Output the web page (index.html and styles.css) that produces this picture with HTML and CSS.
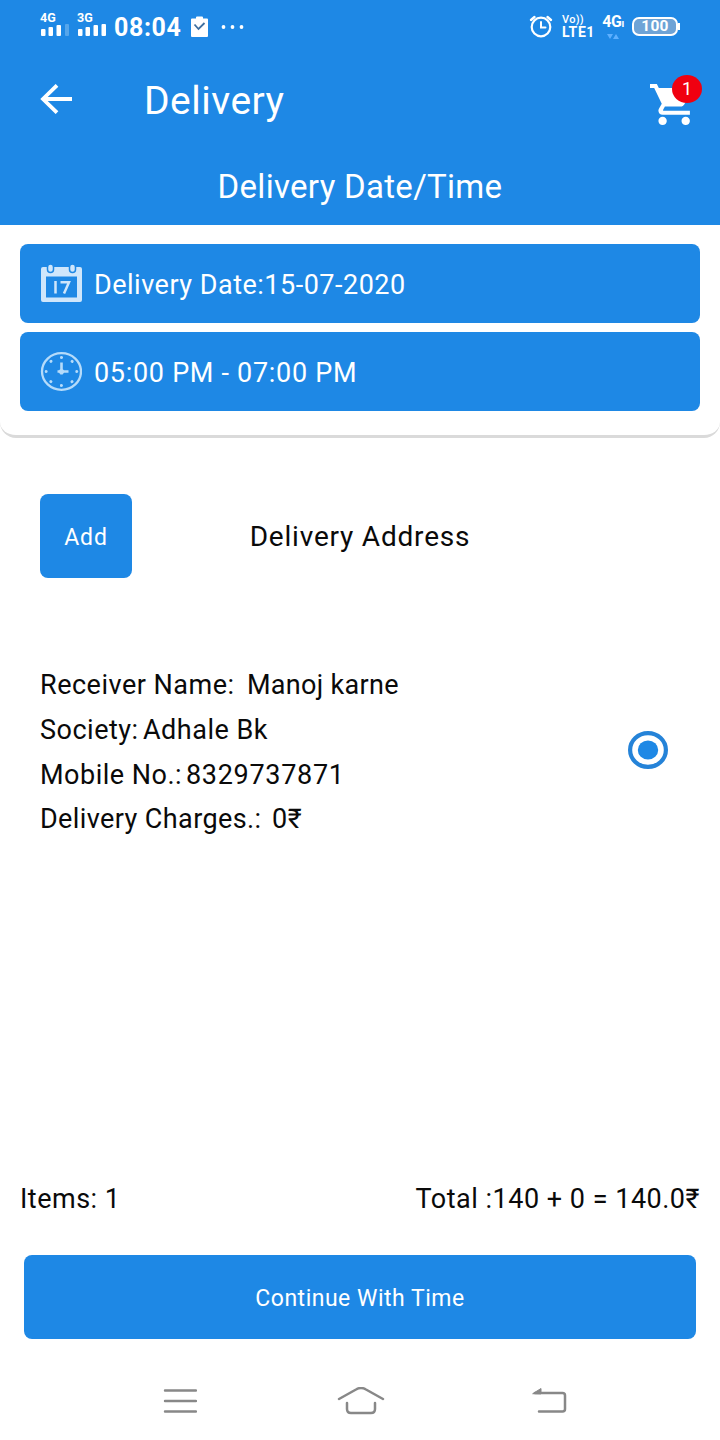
FILE: index.html
```html
<!DOCTYPE html>
<html lang="en">
<head>
    <meta charset="UTF-8">
    <meta name="viewport" content="width=device-width, initial-scale=1.0">
    <title>Delivery</title>
    <link rel="stylesheet" href="styles.css">
</head>
<body>
    <header class="header">
        <div class="status-bar">
            <div class="signal">
                <span class="signal-label">4G</span>
                <svg width="30" height="12" viewBox="0 0 30 12" fill="#fff">
                    <rect x="1" y="5" width="4.500" height="7" rx="1"/>
                    <rect x="8.500" y="3" width="4.500" height="9" rx="1"/>
                    <rect x="16.500" y="1" width="4.500" height="11" rx="1"/>
                    <rect x="25" y="0" width="4" height="12" rx="1" opacity=".25"/>
                </svg>
            </div>
            <div class="signal signal-second">
                <span class="signal-label">3G</span>
                <svg width="30" height="12" viewBox="0 0 30 12" fill="#fff">
                    <rect x="1" y="5" width="4.500" height="7" rx="1"/>
                    <rect x="8.500" y="3" width="4.500" height="9" rx="1"/>
                    <rect x="16.500" y="1" width="4.500" height="11" rx="1"/>
                    <rect x="24.500" y="0" width="4.500" height="12" rx="1"/>
                </svg>
            </div>
            <span class="clock">08:04</span>
            <svg class="task-icon" width="17" height="21" viewBox="0 0 17 21">
                <path d="M1 2.500h4V1.500a1 1 0 0 1 1-1h5a1 1 0 0 1 1 1v1h4a1 1 0 0 1 1 1V20a1 1 0 0 1-1 1H1a1 1 0 0 1-1-1V3.500a1 1 0 0 1 1-1z" fill="#fff"/>
                <path d="M3.500 8.500l4 4.500 6-6" fill="none" stroke="#3f6f9f" stroke-width="1.800"/>
            </svg>
            <svg class="more-icon" width="24" height="4" viewBox="0 0 24 4" fill="#fff">
                <circle cx="2.500" cy="2" r="1.900"/>
                <circle cx="11.500" cy="2" r="1.900"/>
                <circle cx="20.500" cy="2" r="1.900"/>
            </svg>
            <div class="status-right">
                <svg width="24" height="23" viewBox="0 0 24 23" fill="none" stroke="#fff" stroke-linecap="round">
                    <circle cx="12" cy="12" r="9.300" stroke-width="2.200"/>
                    <path d="M12 7v5.500h4.500" stroke-width="2"/>
                    <path d="M2 5l3.500-3M22 5l-3.500-3" stroke-width="2.400"/>
                </svg>
                <div class="volte">
                    <span class="volte-top">Vo))</span>
                    <span class="volte-bottom">LTE1</span>
                </div>
                <div class="network">
                    <span class="network-label">4G<small>ı</small></span>
                    <svg width="12" height="6" viewBox="0 0 12 6" fill="#5eb0ff">
                        <path d="M0 0h6L3 5zM6 5h6L9 0z"/>
                    </svg>
                </div>
                <div class="battery"><span class="battery-level">100</span></div>
            </div>
        </div>
        <div class="app-bar">
            <svg class="back-icon" width="32" height="30" viewBox="0 0 32 30" fill="none" stroke="#fff" stroke-width="3.800">
                <path d="M32 15H3M17 1.300L3 15l14 13.700"/>
            </svg>
            <h1 class="title">Delivery</h1>
            <div class="cart">
                <svg width="42" height="41" viewBox="1 2 20 20" fill="#fff" preserveAspectRatio="none">
                    <path d="M7 18c-1.100 0-1.990.9-1.990 2S5.900 22 7 22s2-.9 2-2-.9-2-2-2zM1 2v2h2l3.600 7.590-1.350 2.450c-.16.28-.25.61-.25.960 0 1.100.9 2 2 2h13v-2H7.420c-.14 0-.25-.11-.25-.25l.03-.12.9-1.630h7.450c.75 0 1.410-.41 1.750-1.030l3.580-6.490A1 1 0 0 0 20 4H5.210l-.94-2H1zm17 16c-1.100 0-1.990.9-1.990 2s.89 2 1.990 2 2-.9 2-2-.9-2-2-2z"/>
                </svg>
                <span class="cart-badge">1</span>
            </div>
        </div>
        <h2 class="subtitle">Delivery Date/Time</h2>
    </header>

    <section class="schedule">
        <div class="slot">
            <svg width="42" height="40" viewBox="0 0 42 40">
                <path d="M3 3h37a2 2 0 0 1 2 2v31a2 2 0 0 1-2 2H3a2 2 0 0 1-2-2V5a2 2 0 0 1 2-2zM6 12.500v21h31v-21z" fill="#cfe6fb" fill-rule="evenodd"/>
                <rect x="7.500" y="0" width="6" height="8.500" rx="3" fill="#cfe6fb" stroke="#1e88e5" stroke-width="1.500"/>
                <rect x="29.500" y="0" width="6" height="8.500" rx="3" fill="#cfe6fb" stroke="#1e88e5" stroke-width="1.500"/>
                <path d="M15.500 17v12.500M20.500 18.200h8.500l-5 11.300" fill="none" stroke="#cfe6fb" stroke-width="2.500"/>
            </svg>
            <span class="slot-text">Delivery Date:15-07-2020</span>
        </div>
        <div class="slot">
            <svg width="42" height="40" viewBox="0 0 42 40" fill="none" stroke="#b5dbfa">
                <ellipse cx="21.500" cy="19.500" rx="19.500" ry="18.300" stroke-width="2.300"/>
                <ellipse cx="21.500" cy="19.500" rx="15.300" ry="14" stroke-width="3" stroke-linecap="round" pathLength="80" stroke-dasharray="0.100 9.900"/>
                <path d="M21.500 10.500v12M17.500 19.500h11" stroke-width="2.600"/>
                <circle cx="21.500" cy="19.500" r="2.600" fill="#b5dbfa" stroke="none"/>
            </svg>
            <span class="slot-text slot-time">05:00 PM - 07:00 PM</span>
        </div>
    </section>

    <section class="address-head">
        <button class="button add-button">Add</button>
        <h3 class="address-title">Delivery Address</h3>
    </section>

    <section class="address">
        <div class="address-details">
            <p><span class="receiver-label">Receiver Name:</span><span class="receiver-name">Manoj karne</span></p>
            <p><span class="society-label">Society:</span><span>Adhale Bk</span></p>
            <p><span class="mobile-label">Mobile No.:</span><span class="mobile-number">8329737871</span></p>
            <p><span class="charges-label">Delivery Charges.:</span><span>0₹</span></p>
        </div>
        <svg class="radio" width="40" height="38" viewBox="0 0 40 38">
            <ellipse cx="20" cy="19" rx="17.900" ry="16.900" fill="none" stroke="#2583d8" stroke-width="4.200"/>
            <ellipse cx="20" cy="19" rx="10.200" ry="9.500" fill="#1e88e5"/>
        </svg>
    </section>

    <footer class="footer">
        <div class="summary">
            <span>Items: 1</span>
            <span>Total :140 + 0 = 140.0₹</span>
        </div>
        <button class="button continue-button">Continue With Time</button>
        <nav class="nav-bar">
            <svg width="34" height="26" viewBox="0 0 34 26" fill="none" stroke="#888" stroke-width="2.400" stroke-linecap="round">
                <path d="M2 2.500h31M2 13h31M2 23.500h31"/>
            </svg>
            <svg class="home-icon" width="48" height="28" viewBox="0 0 48 28" fill="none" stroke="#888" stroke-width="2.500" stroke-linecap="round">
                <path d="M2 12L19 2.500q5-3 10 0L46 12M10 16v6q0 4 4 4h20q4 0 4-4v-6"/>
            </svg>
            <svg width="36" height="26" viewBox="0 0 36 26" fill="none" stroke="#888" stroke-width="2.500" stroke-linecap="round">
                <path d="M4 5h27.500q2.500 0 2.500 2.500v13.500q0 2.500-2.500 2.500H8"/>
                <path d="M2 5.500l8-5v5z" fill="#888" stroke-width="1"/>
            </svg>
        </nav>
    </footer>
</body>
</html>
```

FILE: styles.css
```css
* {
    box-sizing: border-box;
}
body {
    margin: 0;
    height: 1440px;
    display: flex;
    flex-direction: column;
    font-family: Roboto, sans-serif;
    font-size: 27px;
    letter-spacing: 0.5px;
    color: #0a0a0a;
    background-color: #fff;
}
h1, h2, h3, p {
    margin: 0;
    font-weight: 400;
}
svg {
    display: block;
    flex: none;
}
.header {
    height: 225px;
    background-color: #1e88e5;
    color: #fff;
}

/* status bar */
.status-bar {
    height: 52px;
    padding: 0 40px;
    display: flex;
    align-items: center;
}
.signal {
    height: 24px;
    margin-top: -4px;
    display: flex;
    flex-direction: column;
    justify-content: space-between;
}
.signal-second {
    margin-left: 7px;
}
.signal-label {
    font-size: 12.500px;
    line-height: 12px;
    font-weight: 700;
    letter-spacing: 0;
}
.clock {
    margin-left: 7px;
    margin-top: 2px;
    width: 70px;
    font-size: 25px;
    font-weight: 700;
    letter-spacing: 0.6px;
}
.task-icon {
    margin-left: 7px;
}
.more-icon {
    margin-left: 13px;
    margin-top: 2px;
}
.status-right {
    margin-left: auto;
    margin-right: 2px;
    display: flex;
    align-items: center;
}
.volte {
    margin-left: 9px;
    width: 34px;
    display: flex;
    flex-direction: column;
    gap: 1px;
    font-weight: 700;
}
.volte-top {
    font-size: 11px;
    line-height: 11px;
    font-weight: 500;
    letter-spacing: 0.3px;
}
.volte-bottom {
    font-size: 14px;
    line-height: 13px;
    letter-spacing: 0.6px;
}
.network {
    margin-left: 5px;
    width: 24px;
    height: 25px;
    display: flex;
    flex-direction: column;
    align-items: center;
    gap: 2px;
}
.network-label {
    font-size: 16px;
    line-height: 16px;
    font-weight: 700;
    letter-spacing: -0.5px;
}
.network-label small {
    font-size: 10px;
}
.battery {
    position: relative;
    margin-left: 7px;
    width: 46px;
    height: 19px;
    border: 2px solid #fff;
    border-radius: 7px;
    background-color: #6ea3d6;
    display: flex;
    align-items: center;
    justify-content: center;
}
.battery::after {
    content: "";
    position: absolute;
    right: -4px;
    top: 4px;
    width: 2px;
    height: 7px;
    background-color: #fff;
}
.battery-level {
    font-size: 15.500px;
    font-weight: 700;
    letter-spacing: 0.3px;
}

/* app bar */
.app-bar {
    height: 96px;
    padding: 0 18px 0 40px;
    display: flex;
    align-items: center;
}
.back-icon {
    margin-top: -2px;
}
.title {
    margin-left: 72px;
    margin-top: 2px;
    font-size: 39px;
    letter-spacing: 0.5px;
}
.cart {
    position: relative;
    margin-left: auto;
    width: 52px;
    padding-top: 9px;
}
.cart-badge {
    position: absolute;
    left: 22px;
    top: 0;
    width: 30px;
    height: 28px;
    border-radius: 50%;
    background-color: #f00010;
    font-size: 18px;
    line-height: 28px;
    letter-spacing: 0;
    text-align: center;
}
.subtitle {
    font-size: 33px;
    line-height: 78px;
    letter-spacing: 0.3px;
    text-align: center;
}

/* date and time */
.schedule {
    height: 213px;
    padding: 19px 20px 0;
    display: flex;
    flex-direction: column;
    gap: 9px;
    border-bottom: 3px solid #dadada;
    border-radius: 0 0 16px 16px;
}
.slot {
    height: 79px;
    padding: 0 20px;
    display: flex;
    align-items: center;
    gap: 12px;
    border-radius: 8px;
    background-color: #1e88e5;
    color: #fff;
}
.slot-text {
    padding-top: 2px;
}
.slot-time {
    letter-spacing: 0.7px;
}

/* address */
.button {
    padding: 2px 0 0;
    border: none;
    border-radius: 8px;
    background-color: #1e88e5;
    color: #fff;
    font-family: inherit;
    font-size: 23px;
    letter-spacing: 0.5px;
}
.address-head {
    margin-top: 56px;
    padding: 0 40px;
    display: grid;
    grid-template-columns: 92px 1fr 92px;
    align-items: center;
}
.add-button {
    height: 84px;
    letter-spacing: 0.9px;
}
.address-title {
    padding-top: 1px;
    font-size: 28px;
    letter-spacing: 0.8px;
    text-align: center;
}
.address {
    margin-top: 84px;
    padding: 0 52px 0 40px;
    display: flex;
    justify-content: space-between;
    align-items: center;
}
.address-details {
    padding-top: 1px;
}
.address-details p {
    display: flex;
    line-height: 44.8px;
}
.receiver-label {
    width: 207px;
}
.receiver-name {
    letter-spacing: 0.3px;
}
.society-label {
    width: 103px;
}
.mobile-label {
    width: 146px;
}
.mobile-number {
    letter-spacing: 0.7px;
}
.charges-label {
    width: 232px;
    letter-spacing: 0.4px;
}
.radio {
    margin-top: -5px;
}

/* summary and navigation */
.footer {
    margin-top: auto;
}
.summary {
    padding: 0 20px;
    display: flex;
    justify-content: space-between;
    line-height: 36px;
}
.continue-button {
    display: block;
    width: 672px;
    height: 84px;
    margin: 38px auto 0;
}
.nav-bar {
    height: 101px;
    padding: 22px 153px 0 163px;
    display: flex;
    justify-content: space-between;
    align-items: center;
}
.home-icon {
    margin-right: 7px;
}
```
